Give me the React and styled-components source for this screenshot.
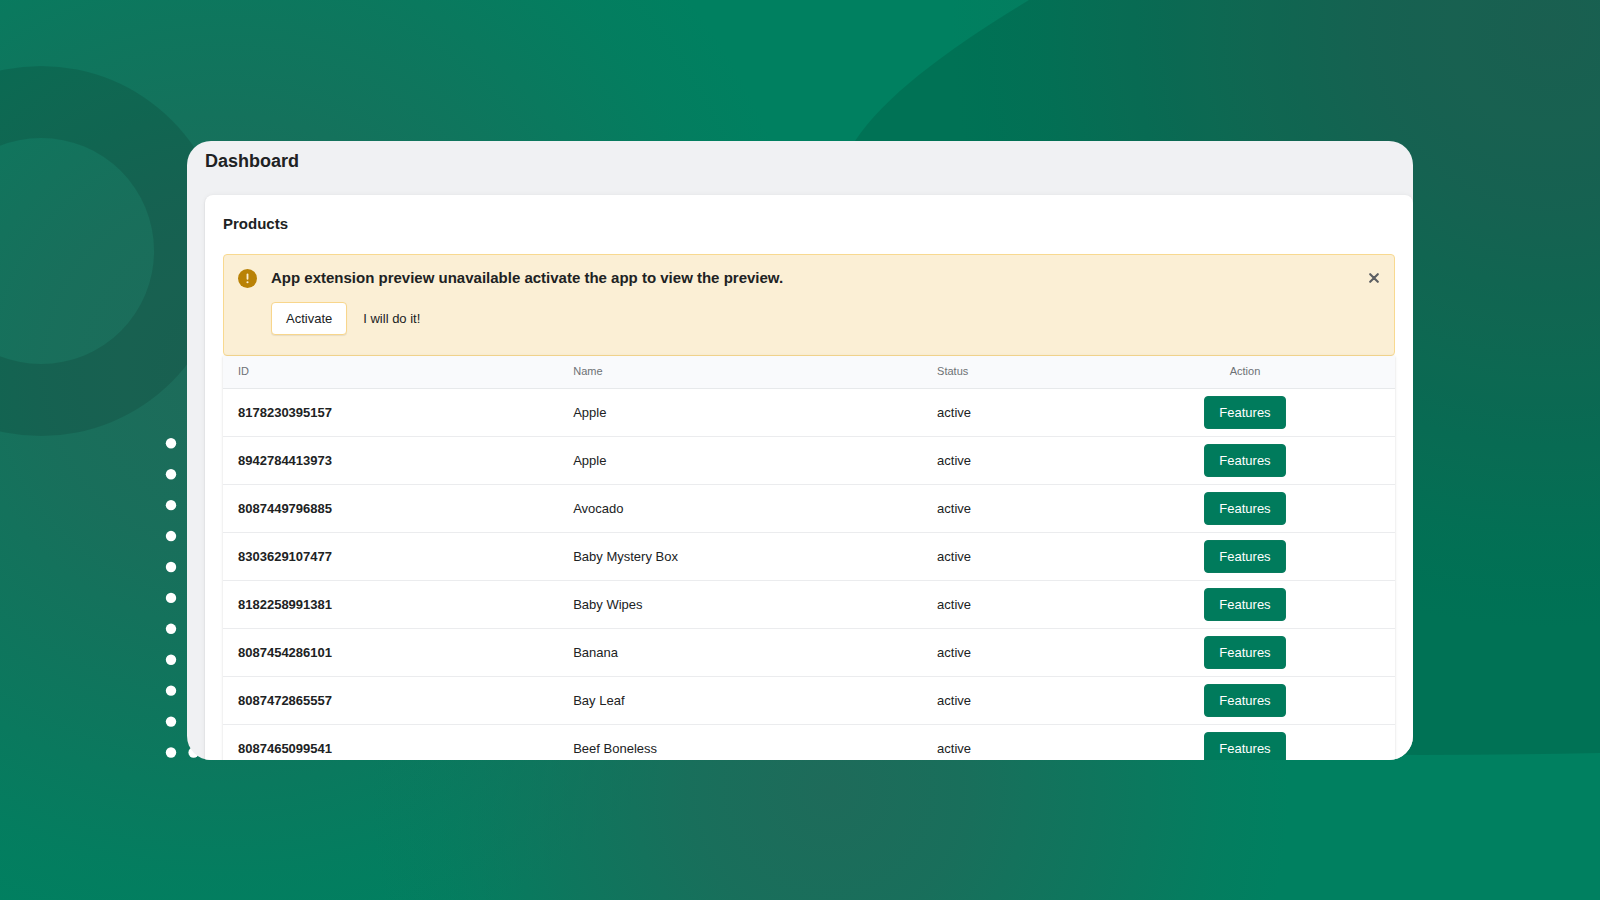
import React from "react";
import styled, { createGlobalStyle } from "styled-components";

const GlobalStyle = createGlobalStyle`
  * { box-sizing: border-box; }
  body {
    margin: 0;
    background: #008060;
    color: #202223;
    font-family: "Liberation Sans", Arial, sans-serif;
    font-size: 13px;
    line-height: 18px;
  }
  button { font: inherit; cursor: pointer; }
`;

const Stage = styled.div`
  position: relative;
  display: flex;
  height: 100vh;
  padding: 141px 187px 140px;
  overflow: hidden;
`;

const Backdrop = styled.svg`
  position: absolute;
  inset: 0;
  width: 100%;
  height: 100%;
`;

const Frame = styled.main`
  position: relative;
  flex: 1;
  min-width: 0;
  padding-left: 18px;
  border-radius: 24px;
  background: #f0f1f3;
  overflow: hidden;
`;

const PageTitle = styled.h1`
  margin: 0;
  padding: 8px 0 22px;
  font-size: 18px;
  line-height: 24px;
`;

const Card = styled.section`
  padding: 19px 18px 0;
  border-radius: 8px;
  background: #fff;
  box-shadow: 0 0 5px rgba(23, 24, 24, 0.05), 0 1px 2px rgba(0, 0, 0, 0.12);
`;

const CardTitle = styled.h2`
  margin: 0 0 20px;
  font-size: 15px;
  line-height: 20px;
`;

const Banner = styled.div`
  display: flex;
  align-items: flex-start;
  gap: 14px;
  padding: 14px 14px 20px;
  border: 1px solid #f8d990;
  border-radius: 4px;
  background: #fbefd5;
`;

const BannerIcon = styled.svg`
  flex: none;
  width: 19px;
  height: 19px;
`;

const BannerBody = styled.div`
  flex: 1;
`;

const BannerTitle = styled.h3`
  margin: 0 0 15px;
  font-size: 15px;
  line-height: 18px;
`;

const BannerActions = styled.div`
  display: flex;
  gap: 16px;
`;

const OutlineButton = styled.button`
  height: 33px;
  padding: 0 14px;
  border: 1px solid #f8d68c;
  border-radius: 4px;
  background: #fff;
  color: #202223;
  box-shadow: 0 1px 1px rgba(0, 0, 0, 0.08);
`;

const PlainButton = styled.button`
  height: 33px;
  padding: 0;
  border: 0;
  background: none;
  color: #202223;
`;

const CloseButton = styled.button`
  display: flex;
  align-items: center;
  justify-content: center;
  width: 12px;
  height: 18px;
  padding: 0;
  border: 0;
  background: none;
  color: #5c5f62;
`;

const Table = styled.table`
  width: 100%;
  table-layout: fixed;
  border-collapse: separate;
  border-spacing: 0;
  box-shadow: 0 0 3px rgba(23, 24, 24, 0.08), 0 1px 2px rgba(0, 0, 0, 0.08);
`;

const Column = styled.col`
  width: ${(p) => p.$width};
`;

const HeadCell = styled.th`
  height: 33px;
  padding: 0 15px 2px;
  border-bottom: 1px solid #e7e9eb;
  background: #f9fafc;
  color: #6d7175;
  font-size: 11px;
  font-weight: 400;
  text-align: ${(p) => p.$align || "left"};
`;

const Row = styled.tr`
  & > * {
    height: 48px;
    border-bottom: 1px solid #ebecee;
  }
`;

const Cell = styled.td`
  padding: 0 15px;
  text-align: ${(p) => p.$align || "left"};
`;

const IdCell = styled.th`
  padding: 0 15px;
  font-weight: 700;
  text-align: left;
`;

const PrimaryButton = styled.button`
  height: 33px;
  padding: 0 14px;
  border: 1px solid #087c5e;
  border-radius: 4px;
  background: #007b5c;
  color: #fff;
`;

const products = [
  ["8178230395157", "Apple"],
  ["8942784413973", "Apple"],
  ["8087449796885", "Avocado"],
  ["8303629107477", "Baby Mystery Box"],
  ["8182258991381", "Baby Wipes"],
  ["8087454286101", "Banana"],
  ["8087472865557", "Bay Leaf"],
  ["8087465099541", "Beef Boneless"],
];

const dots = Array.from({ length: 11 }, (_, i) => 443.3 + i * 30.92);

function Scenery() {
  const glow = (id, cx, cy, r) => (
    <radialGradient id={id} gradientUnits="userSpaceOnUse" cx={cx} cy={cy} r={r}>
      <stop offset="0" stopColor="#1e6b5a" />
      <stop offset="0.3" stopColor="#1e6b5a" stopOpacity="0.82" />
      <stop offset="0.6" stopColor="#1e6b5a" stopOpacity="0.46" />
      <stop offset="0.85" stopColor="#1e6b5a" stopOpacity="0.12" />
      <stop offset="1" stopColor="#1e6b5a" stopOpacity="0" />
    </radialGradient>
  );
  return (
    <Backdrop viewBox="0 0 1600 900" preserveAspectRatio="none" aria-hidden="true">
      <defs>
        {glow("glowLeft", 220, 370, 600)}
        {glow("glowBottom", 830, 790, 460)}
        {glow("glowCorner", 1550, 30, 600)}
      </defs>
      <rect width="1600" height="900" fill="#008060" />
      <rect width="1600" height="900" fill="url(#glowLeft)" />
      <rect width="1600" height="900" fill="url(#glowBottom)" />
      <rect width="1600" height="900" fill="url(#glowCorner)" />
      <path
        fillRule="evenodd"
        fill="#000"
        fillOpacity="0.11"
        d="M41 66a185 185 0 1 0 0 370a185 185 0 1 0 0-370zM41 138a113 113 0 1 1 0 226a113 113 0 1 1 0-226z"
      />
      <path
        fill="#000"
        fillOpacity="0.11"
        d="M1029 0C950 48 885 95 855 141C760 330 1000 755 1420 755Q1510 755 1600 753V0Z"
      />
      <g fill="#fff">
        {dots.map((y) => <circle key={y} cx="171" cy={y} r="5.2" />)}
        <circle cx="193.6" cy="752.5" r="5.2" />
      </g>
    </Backdrop>
  );
}

export default function App() {
  return (
    <>
      <GlobalStyle />
      <Stage>
        <Scenery />
        <Frame>
          <PageTitle>Dashboard</PageTitle>
          <Card>
            <CardTitle>Products</CardTitle>
            <Banner role="status">
              <BannerIcon viewBox="0 0 20 20" aria-hidden="true">
                <circle cx="10" cy="10" r="10" fill="#b98207" />
                <path d="M10 5.7v4.6" stroke="#fbefd5" strokeWidth="1.9" strokeLinecap="round" />
                <circle cx="10" cy="14" r="1.1" fill="#fbefd5" />
              </BannerIcon>
              <BannerBody>
                <BannerTitle>App extension preview unavailable activate the app to view the preview.</BannerTitle>
                <BannerActions>
                  <OutlineButton type="button">Activate</OutlineButton>
                  <PlainButton type="button">I will do it!</PlainButton>
                </BannerActions>
              </BannerBody>
              <CloseButton type="button" aria-label="Dismiss">
                <svg width="10" height="10" viewBox="0 0 10 10" aria-hidden="true">
                  <path d="M1.2 1.2l7.6 7.6M8.8 1.2l-7.6 7.6" stroke="currentColor" strokeWidth="2.1" strokeLinecap="round" />
                </svg>
              </CloseButton>
            </Banner>
            <Table>
              <colgroup>
                <Column $width="28.6%" />
                <Column $width="31.05%" />
                <Column $width="14.75%" />
                <Column $width="25.6%" />
              </colgroup>
              <thead>
                <tr>
                  <HeadCell scope="col">ID</HeadCell>
                  <HeadCell scope="col">Name</HeadCell>
                  <HeadCell scope="col">Status</HeadCell>
                  <HeadCell scope="col" $align="center">Action</HeadCell>
                </tr>
              </thead>
              <tbody>
                {products.map(([id, name]) => (
                  <Row key={id}>
                    <IdCell scope="row">{id}</IdCell>
                    <Cell>{name}</Cell>
                    <Cell>active</Cell>
                    <Cell $align="center">
                      <PrimaryButton type="button">Features</PrimaryButton>
                    </Cell>
                  </Row>
                ))}
              </tbody>
            </Table>
          </Card>
        </Frame>
      </Stage>
    </>
  );
}
